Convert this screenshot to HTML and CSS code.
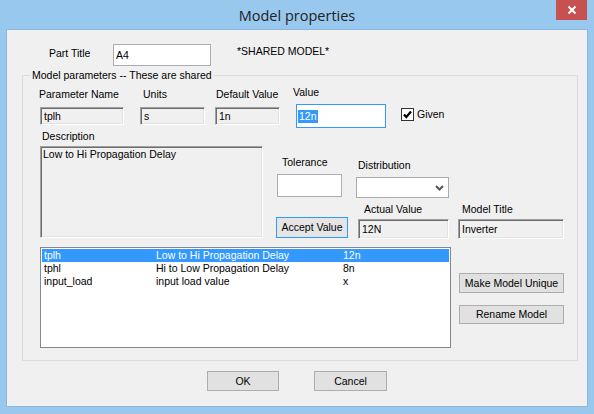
FILE: index.html
```html
<!DOCTYPE html>
<html>
<head>
<meta charset="utf-8">
<link rel="stylesheet" href="styles.css">
</head>
<body>
<div class="window">
  <div class="titlebar">
    <div class="tb-spacer"></div>
    <div class="title">Model properties</div>
    <div class="tb-right">
      <div class="close">
        <svg width="10" height="10" viewBox="0 0 10 10"><path d="M1.5 1.5 L8.5 8.5 M8.5 1.5 L1.5 8.5" stroke="#fff" stroke-width="2" fill="none"/></svg>
      </div>
    </div>
  </div>
  <div class="client">
    <div class="part-row">
      <span class="part-lbl">Part Title</span>
      <div class="edit part-edit">A4</div>
      <span class="shared">*SHARED MODEL*</span>
    </div>
    <div class="group">
      <div class="legend">Model parameters -- These are shared</div>
      <div class="row-a">
        <div class="field f-name"><span class="lbl">Parameter Name</span><div class="ro">tplh</div></div>
        <div class="field f-units"><span class="lbl">Units</span><div class="ro">s</div></div>
        <div class="field f-def"><span class="lbl">Default Value</span><div class="ro">1n</div></div>
        <div class="field f-val"><span class="lbl">Value</span><div class="edit focus"><span class="sel">12n</span></div></div>
        <div class="given">
          <span class="check"><svg width="11" height="11" viewBox="0 0 11 11"><path d="M2 5.5 L4.3 8 L9 2.5" stroke="#000" stroke-width="2.2" fill="none"/></svg></span>
          <span>Given</span>
        </div>
      </div>
      <div class="row-b">
        <div class="field f-desc"><span class="lbl">Description</span><div class="ro desc-box">Low to Hi Propagation Delay</div></div>
        <div class="right">
          <div class="sub1">
            <div class="field f-tol"><span class="lbl">Tolerance</span><div class="edit"></div></div>
            <div class="field f-dist"><span class="lbl">Distribution</span>
              <div class="combo"><svg width="9" height="6" viewBox="0 0 9 6"><path d="M1 1 L4.5 4.5 L8 1" stroke="#555" stroke-width="2" fill="none"/></svg></div>
            </div>
          </div>
          <div class="sub2">
            <div class="btn accept">Accept Value</div>
            <div class="field f-act"><span class="lbl">Actual Value</span><div class="ro">12N</div></div>
            <div class="field f-mt"><span class="lbl">Model Title</span><div class="ro">Inverter</div></div>
          </div>
        </div>
      </div>
      <div class="row-c">
        <div class="list">
          <div class="li selected"><span>tplh</span><span>Low to Hi Propagation Delay</span><span>12n</span></div>
          <div class="li"><span>tphl</span><span>Hi to Low Propagation Delay</span><span>8n</span></div>
          <div class="li"><span>input_load</span><span>input load value</span><span>x</span></div>
        </div>
        <div class="side-btns">
          <div class="btn make">Make Model Unique</div>
          <div class="btn rename">Rename Model</div>
        </div>
      </div>
    </div>
    <div class="footer">
      <div class="btn ok">OK</div>
      <div class="btn cancel">Cancel</div>
    </div>
  </div>
</div>
</body>
</html>
```
FILE: styles.css
```css
* { box-sizing: border-box; }
html, body { margin: 0; padding: 0; }
body {
  width: 594px;
  height: 414px;
  overflow: hidden;
  background: #99c8ef;
  font-family: "Liberation Sans", Arial, sans-serif;
  font-size: 10.5px;
  line-height: 13px;
  color: #000;
}
.window { width: 594px; height: 414px; display: flex; flex-direction: column; }

/* title bar */
.titlebar {
  height: 30px;
  display: grid;
  grid-template-columns: 1fr auto 1fr;
  align-items: start;
}
.title {
  font-family: "Open Sans", "Noto Sans", sans-serif;
  font-size: 14.5px;
  line-height: 20px;
  margin-top: 6px;
  color: #222;
}
.tb-right { display: flex; justify-content: flex-end; }
.close {
  width: 31px;
  height: 20px;
  margin-right: 7px;
  background: #c75050;
  display: flex;
  align-items: center;
  justify-content: center;
}
.close svg { display: block; }

/* client */
.client {
  margin: 0 7px;
  height: 376px;
  background: #f0f0f0;
  box-shadow: 0 0 0 1px #8cb6de;
  display: flex;
  flex-direction: column;
}

.part-row { display: flex; align-items: flex-start; height: 36px; }
.part-lbl { width: 64px; margin-left: 42px; margin-top: 17px; white-space: nowrap; }
.part-edit { width: 98px; height: 22px; margin-top: 14px; line-height: 20px; }
.shared { margin-left: 26px; margin-top: 15px; white-space: nowrap; }

/* common controls */
.lbl { display: block; white-space: nowrap; height: 13px; }
.field { display: flex; flex-direction: column; align-items: flex-start; }
.ro {
  background: #f0f0f0;
  border: 1px solid;
  border-color: #a0a0a0 #fff #fff #a0a0a0;
  box-shadow: inset 1px 1px 0 #6d6d6d, inset -1px -1px 0 #e3e3e3;
  padding: 0 3px;
  white-space: nowrap;
}
.edit {
  background: #fff;
  border: 1px solid #abadb3;
  padding: 0 2px;
  white-space: nowrap;
}
.edit.focus { border-color: #3399ff; }
.sel { background: #3399ff; color: #fff; display: inline-block; line-height: 13px; padding: 0 1px; }
.btn {
  background: #e1e1e1;
  border: 1px solid #adadad;
  display: flex;
  align-items: center;
  justify-content: center;
  white-space: nowrap;
}

/* group box */
.group {
  margin-top: 9px;
  margin-left: 15px;
  width: 556px;
  height: 286px;
  border: 1px solid #dcdcdc;
  display: flex;
  flex-direction: column;
}
.legend {
  align-self: flex-start;
  margin-top: -8px;
  margin-left: 7px;
  padding: 0 2px;
  height: 14px;
  line-height: 14px;
  background: #f0f0f0;
  white-space: nowrap;
}

/* row A */
.row-a { display: flex; align-items: flex-start; margin-top: 4px; height: 42px; }
.f-name { margin-left: 17px; }
.f-name .lbl { margin-top: 2px; margin-left: -1px; }
.f-name .ro { margin-top: 6px; width: 84px; height: 18px; line-height: 16px; }
.f-units { margin-left: 16px; }
.f-units .lbl { margin-top: 2px; margin-left: 3px; }
.f-units .ro { margin-top: 6px; width: 65px; height: 18px; line-height: 16px; }
.f-def { margin-left: 10px; }
.f-def .lbl { margin-top: 2px; margin-left: 1px; }
.f-def .ro { margin-top: 6px; width: 65px; height: 18px; line-height: 16px; }
.f-val { margin-left: 16px; }
.f-val .lbl { margin-left: -3px; }
.f-val .edit { margin-top: 5px; width: 90px; height: 24px; display: flex; align-items: center; padding: 0 1px; }
.given { display: flex; align-items: center; margin-left: 15px; margin-top: 22px; gap: 3px; }
.check {
  width: 13px;
  height: 13px;
  border: 1px solid #333;
  background: #fff;
  display: flex;
  align-items: center;
  justify-content: center;
}
.check svg { display: block; }

/* row B */
.row-b { display: flex; align-items: flex-start; margin-top: 1px; height: 110px; }
.f-desc { margin-left: 17px; }
.f-desc .lbl { margin-top: 1px; margin-left: 2px; }
.desc-box { margin-top: 3px; width: 223px; height: 92px; padding: 1px 2px; }
.right { margin-left: 13px; display: flex; flex-direction: column; }
.sub1 { display: flex; align-items: flex-start; height: 69px; }
.f-tol { margin-left: 1px; }
.f-tol .lbl { margin-top: 27px; margin-left: 5px; }
.f-tol .edit { margin-top: 5px; width: 65px; height: 23px; }
.f-dist { margin-left: 14px; }
.f-dist .lbl { margin-top: 30px; margin-left: 2px; }
.combo {
  margin-top: 5px;
  width: 93px;
  height: 21px;
  background: #fff;
  border: 1px solid #acacac;
  display: flex;
  align-items: center;
  justify-content: flex-end;
  padding-right: 4px;
}
.combo svg { display: block; }
.sub2 { display: flex; align-items: flex-start; margin-top: 5px; }
.accept { margin-top: 14px; width: 72px; height: 21px; border-color: #3399ff; background: #e5e5e5; }
.f-act { margin-left: 10px; }
.f-act .lbl { margin-left: 6px; }
.f-act .ro { margin-top: 3px; width: 91px; height: 20px; line-height: 18px; }
.f-mt { margin-left: 9px; }
.f-mt .lbl { margin-left: 4px; }
.f-mt .ro { margin-top: 3px; width: 106px; height: 20px; line-height: 18px; }

/* row C */
.row-c { display: flex; align-items: flex-start; margin-top: 8px; }
.list {
  margin-left: 17px;
  width: 411px;
  height: 101px;
  background: #fff;
  border: 1px solid #828790;
  padding: 1px;
}
.li {
  display: grid;
  grid-template-columns: 112px 187px 1fr;
  height: 13px;
  line-height: 13px;
  padding-left: 2px;
  white-space: nowrap;
}
.li.selected { background: #3399ff; color: #fff; }
.side-btns { margin-left: 8px; display: flex; flex-direction: column; }
.make { margin-top: 26px; width: 105px; height: 20px; }
.rename { margin-top: 12px; width: 105px; height: 19px; }

/* footer */
.footer { display: flex; margin-top: 10px; }
.ok { margin-left: 200px; width: 72px; height: 20px; }
.cancel { margin-left: 35px; width: 73px; height: 20px; }
```
